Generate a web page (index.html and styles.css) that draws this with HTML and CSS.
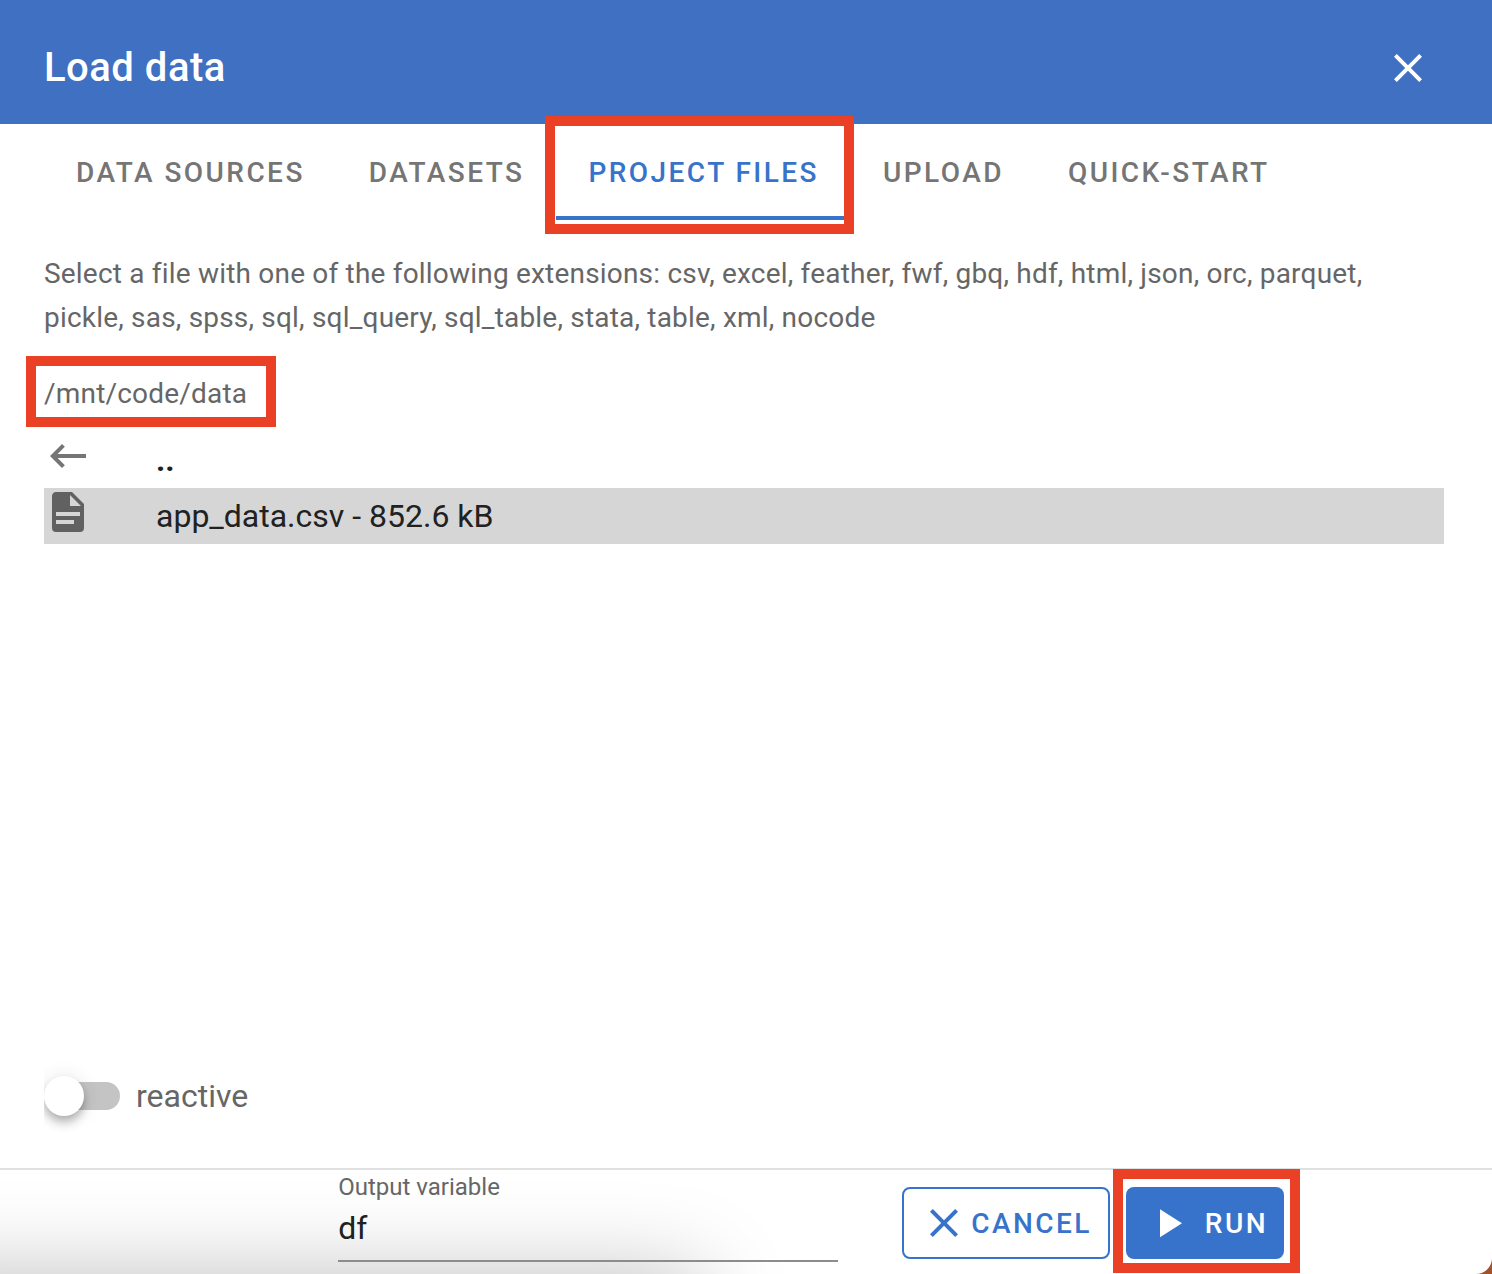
FILE: index.html
```html
<!DOCTYPE html>
<html lang="en">
<head>
<meta charset="utf-8">
<title>Load data</title>
<link rel="stylesheet" href="styles.css">
</head>
<body>
<main class="dialog">
  <header class="toolbar">
    <h1 class="toolbar-title">Load data</h1>
    <button class="icon-button" type="button" aria-label="Close">
      <svg class="icon" viewBox="0 0 24 24" aria-hidden="true"><path d="M19 6.41L17.59 5 12 10.59 6.41 5 5 6.41 10.59 12 5 17.59 6.41 19 12 13.41 17.59 19 19 17.59 13.41 12z"/></svg>
    </button>
  </header>

  <nav class="tabs" role="tablist">
    <button class="tab" type="button" role="tab">Data sources</button>
    <button class="tab" type="button" role="tab">Datasets</button>
    <button class="tab tab-active" type="button" role="tab" aria-selected="true">Project files<span class="callout callout-tab"></span></button>
    <button class="tab" type="button" role="tab">Upload</button>
    <button class="tab" type="button" role="tab">Quick-start</button>
  </nav>

  <section class="content">
    <p class="hint">Select a file with one of the following extensions: csv, excel, feather, fwf, gbq, hdf, html, json, orc, parquet, pickle, sas, spss, sql, sql_query, sql_table, stata, table, xml, nocode</p>
    <p class="path">/mnt/code/data<span class="callout callout-path"></span></p>
    <ul class="files">
      <li><button class="file" type="button">
        <svg class="icon file-icon" viewBox="0 0 24 24" aria-hidden="true"><path d="M21 11v2H6.83l3.58 3.59L9 18l-6-6 6-6 1.41 1.41L6.83 11H21z"/></svg>
        <span class="file-parent">..</span>
      </button></li>
      <li><button class="file file-selected" type="button">
        <svg class="icon file-icon" viewBox="0 0 24 24" aria-hidden="true"><path d="M13 9h5.5L13 3.5V9M6 2h8l6 6v12a2 2 0 0 1-2 2H6a2 2 0 0 1-2-2V4c0-1.110.89-2 2-2m9 16v-2H6v2h9m3-4v-2H6v2h12z"/></svg>
        <span>app_data.csv - 852.6 kB</span>
      </button></li>
    </ul>
    <label class="switch">
      <input class="switch-input" type="checkbox" role="switch">
      <span>reactive</span>
    </label>
  </section>

  <footer class="actions">
    <div class="field">
      <label class="field-label" for="output">Output variable</label>
      <input class="field-input" id="output" type="text" value="df">
    </div>
    <div class="buttons">
      <button class="button button-outlined" type="button">
        <svg class="icon" viewBox="0 0 24 24" aria-hidden="true"><path d="M19 6.41L17.59 5 12 10.59 6.41 5 5 6.41 10.59 12 5 17.59 6.41 19 12 13.41 17.59 19 19 17.59 13.41 12z"/></svg>
        <span>Cancel</span>
      </button>
      <button class="button button-primary" type="button">
        <svg class="icon" viewBox="0 0 24 24" aria-hidden="true"><path d="M8 5.14v14l11-7-11-7z"/></svg>
        <span>Run</span>
        <span class="callout callout-run"></span>
      </button>
    </div>
  </footer>
</main>
</body>
</html>
```
FILE: styles.css
```css
* { box-sizing: border-box; }

:root {
  --primary: #3873cb;
  --callout: #ea4026;
  --muted: #666;
}

body {
  margin: 0;
  background: #a0522d;
  color: #212121;
  font-family: Roboto, sans-serif;
  font-size: 32px;
}

button, input { font: inherit; color: inherit; }

button {
  padding: 0;
  border: 0;
  background: none;
  cursor: pointer;
}

.dialog {
  display: flex;
  flex-direction: column;
  min-height: 100vh;
  overflow: hidden;
  background: #fff;
  border-bottom-right-radius: 16px;
}

.icon {
  flex: none;
  width: 48px;
  height: 48px;
  fill: currentColor;
}

/* Highlight frames drawn over the controls */
.callout {
  position: absolute;
  border: 10px solid var(--callout);
  pointer-events: none;
}

.toolbar {
  display: flex;
  align-items: center;
  justify-content: space-between;
  height: 124px;
  padding: 12px 60px 0 44px;
  background: #4070c2;
  color: #fff;
}

.toolbar-title {
  margin: 0;
  font-size: 40px;
  font-weight: 500;
  line-height: 64px;
  letter-spacing: 0.0125em;
}

.icon-button { display: flex; }

.tabs {
  display: flex;
  padding: 0 44px;
}

.tab {
  position: relative;
  height: 96px;
  padding: 0 32px;
  color: #757575;
  font-size: 28px;
  font-weight: 500;
  letter-spacing: 0.0875em;
  text-transform: uppercase;
}

.tab-active {
  color: var(--primary);
  box-shadow: inset 0 -4px var(--primary);
}

.callout-tab { inset: -8px -3px -14px -11px; }

.content {
  flex: 1;
  display: flex;
  flex-direction: column;
  padding: 32px 48px 32px 44px;
}

.hint, .path {
  margin: 0;
  color: var(--muted);
  font-size: 28px;
  line-height: 44px;
  letter-spacing: 0.007em;
}

.path {
  position: relative;
  align-self: flex-start;
  margin: 32px 0 16px;
}

.callout-path { inset: -16px -29px -11px -18px; }

.files {
  margin: 0;
  padding: 0;
  list-style: none;
}

.file {
  display: flex;
  gap: 64px;
  width: 100%;
  height: 56px;
  line-height: 56px;
  text-align: left;
}

.file-selected { background: #d6d6d6; }

.file-parent { font-weight: 700; }

.file-icon { color: #757575; }

.file-selected .file-icon { color: #616161; }

.switch {
  display: flex;
  align-items: center;
  align-self: flex-start;
  gap: 16px;
  height: 80px;
  margin-top: auto;
  padding-right: 8px;
  overflow: hidden;
  color: var(--muted);
}

.switch-input {
  appearance: none;
  display: flex;
  align-items: center;
  width: 76px;
  height: 28px;
  margin: 0;
  border-radius: 14px;
  background: linear-gradient(#c4c4c4, #c4c4c4) right / 56px 100% no-repeat;
}

.switch-input::before {
  content: "";
  width: 40px;
  height: 40px;
  border-radius: 50%;
  background: #fff;
  box-shadow: 0 4px 8px -2px rgba(0, 0, 0, 0.2), 0 8px 10px rgba(0, 0, 0, 0.14), 0 2px 20px rgba(0, 0, 0, 0.12);
}

.switch-input:checked::before { margin-left: auto; }

.actions {
  position: relative;
  display: flex;
  justify-content: flex-end;
  gap: 64px;
  height: 106px;
  padding-right: 208px;
  border-top: 2px solid #e0e0e0;
}

/* Soft shade that rises from the bottom-left edge */
.actions::before {
  content: "";
  position: absolute;
  top: 100%;
  left: -100px;
  width: 800px;
  height: 100px;
  box-shadow: 0 0 88px rgba(0, 0, 0, 0.25);
}

.field {
  position: relative;
  display: flex;
  flex-direction: column;
  width: 500px;
  height: 92px;
  border-bottom: 2px solid #8c8c8c;
}

.field-label {
  color: var(--muted);
  font-size: 24px;
  line-height: 34px;
}

.field-input {
  width: 100%;
  height: 48px;
  padding: 0;
  border: 0;
  outline: 0;
  background: none;
}

.buttons {
  display: flex;
  gap: 16px;
  padding-top: 17px;
}

.button {
  position: relative;
  display: flex;
  align-items: center;
  height: 72px;
  border-radius: 8px;
  font-size: 28px;
  font-weight: 500;
  letter-spacing: 0.0875em;
  text-transform: uppercase;
}

.button-outlined {
  gap: 3px;
  padding: 0 16px;
  border: 2px solid var(--primary);
  color: var(--primary);
}

.button-primary {
  gap: 13px;
  padding: 0 16px 0 18px;
  background: var(--primary);
  color: #fff;
}

.callout-run { inset: -18px -16px -14px -13px; }
```
